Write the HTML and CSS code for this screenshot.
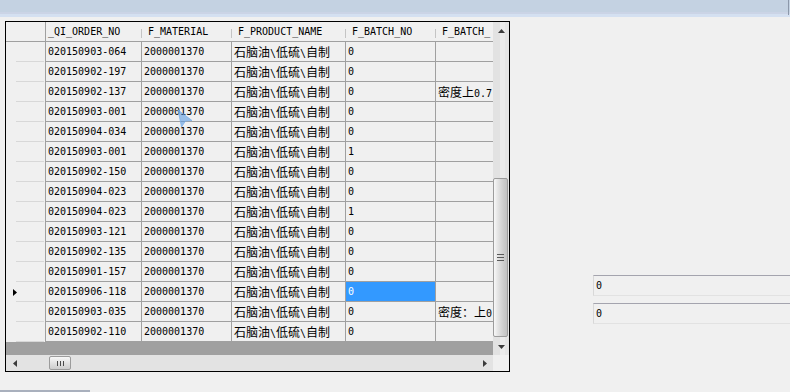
FILE: index.html
```html
<!DOCTYPE html>
<html>
<head>
<meta charset="utf-8">
<link rel="stylesheet" href="styles.css">
</head>
<body>
<div class="titlebar"><span class="edge"></span></div>
<div class="main">
  <div class="grid">
    <div class="table">
      <div class="row head">
        <div class="rh"></div>
        <div class="c c1">_QI_ORDER_NO</div>
        <div class="c">F_MATERIAL</div>
        <div class="c">F_PRODUCT_NAME</div>
        <div class="c">F_BATCH_NO</div>
        <div class="c">F_BATCH_</div>
      </div>
      <div class="row"><div class="rh"></div><div class="c">020150903-064</div><div class="c">2000001370</div><div class="c"><span class="zh">石脑油</span>\<span class="zh">低硫</span>\<span class="zh">自制</span></div><div class="c">0</div><div class="c"></div></div>
      <div class="row"><div class="rh"></div><div class="c">020150902-197</div><div class="c">2000001370</div><div class="c"><span class="zh">石脑油</span>\<span class="zh">低硫</span>\<span class="zh">自制</span></div><div class="c">0</div><div class="c"></div></div>
      <div class="row"><div class="rh"></div><div class="c">020150902-137</div><div class="c">2000001370</div><div class="c"><span class="zh">石脑油</span>\<span class="zh">低硫</span>\<span class="zh">自制</span></div><div class="c">0</div><div class="c"><span class="zh">密度上</span>0.7</div></div>
      <div class="row"><div class="rh"></div><div class="c">020150903-001</div><div class="c">2000001370</div><div class="c"><span class="zh">石脑油</span>\<span class="zh">低硫</span>\<span class="zh">自制</span></div><div class="c">0</div><div class="c"></div></div>
      <div class="row"><div class="rh"></div><div class="c">020150904-034</div><div class="c">2000001370</div><div class="c"><span class="zh">石脑油</span>\<span class="zh">低硫</span>\<span class="zh">自制</span></div><div class="c">0</div><div class="c"></div></div>
      <div class="row"><div class="rh"></div><div class="c">020150903-001</div><div class="c">2000001370</div><div class="c"><span class="zh">石脑油</span>\<span class="zh">低硫</span>\<span class="zh">自制</span></div><div class="c">1</div><div class="c"></div></div>
      <div class="row"><div class="rh"></div><div class="c">020150902-150</div><div class="c">2000001370</div><div class="c"><span class="zh">石脑油</span>\<span class="zh">低硫</span>\<span class="zh">自制</span></div><div class="c">0</div><div class="c"></div></div>
      <div class="row"><div class="rh"></div><div class="c">020150904-023</div><div class="c">2000001370</div><div class="c"><span class="zh">石脑油</span>\<span class="zh">低硫</span>\<span class="zh">自制</span></div><div class="c">0</div><div class="c"></div></div>
      <div class="row"><div class="rh"></div><div class="c">020150904-023</div><div class="c">2000001370</div><div class="c"><span class="zh">石脑油</span>\<span class="zh">低硫</span>\<span class="zh">自制</span></div><div class="c">1</div><div class="c"></div></div>
      <div class="row"><div class="rh"></div><div class="c">020150903-121</div><div class="c">2000001370</div><div class="c"><span class="zh">石脑油</span>\<span class="zh">低硫</span>\<span class="zh">自制</span></div><div class="c">0</div><div class="c"></div></div>
      <div class="row"><div class="rh"></div><div class="c">020150902-135</div><div class="c">2000001370</div><div class="c"><span class="zh">石脑油</span>\<span class="zh">低硫</span>\<span class="zh">自制</span></div><div class="c">0</div><div class="c"></div></div>
      <div class="row"><div class="rh"></div><div class="c">020150901-157</div><div class="c">2000001370</div><div class="c"><span class="zh">石脑油</span>\<span class="zh">低硫</span>\<span class="zh">自制</span></div><div class="c">0</div><div class="c"></div></div>
      <div class="row"><div class="rh"><svg class="marker" width="4" height="7" viewBox="0 0 4 7"><polygon points="0,0 4,3.5 0,7" fill="#000"/></svg></div><div class="c">020150906-118</div><div class="c">2000001370</div><div class="c"><span class="zh">石脑油</span>\<span class="zh">低硫</span>\<span class="zh">自制</span></div><div class="c sel">0</div><div class="c"></div></div>
      <div class="row"><div class="rh"></div><div class="c">020150903-035</div><div class="c">2000001370</div><div class="c"><span class="zh">石脑油</span>\<span class="zh">低硫</span>\<span class="zh">自制</span></div><div class="c">0</div><div class="c"><span class="zh">密度：上</span>0</div></div>
      <div class="row"><div class="rh"></div><div class="c">020150902-110</div><div class="c">2000001370</div><div class="c"><span class="zh">石脑油</span>\<span class="zh">低硫</span>\<span class="zh">自制</span></div><div class="c">0</div><div class="c"></div></div>
      <div class="filler"></div>
    </div>
    <div class="vscroll">
      <div class="vbtn"><svg width="7" height="4" viewBox="0 0 7 4"><polygon points="0,4 3.5,0 7,4" fill="#3c3c3c"/></svg></div>
      <div class="vtrack"><div class="vthumb"><div class="vgrip"></div></div></div>
      <div class="vbtn"><svg width="7" height="4" viewBox="0 0 7 4"><polygon points="0,0 7,0 3.5,4" fill="#3c3c3c"/></svg></div>
    </div>
    <div class="hscroll">
      <svg class="hl" width="4" height="7" viewBox="0 0 4 7"><polygon points="4,0 0,3.5 4,7" fill="#3c3c3c"/></svg>
      <div class="hthumb"><div class="hgrip"></div></div>
      <svg class="hr" width="4" height="7" viewBox="0 0 4 7"><polygon points="0,0 4,3.5 0,7" fill="#3c3c3c"/></svg>
    </div>
    <div class="corner"></div>
    <svg class="cursor" width="17" height="20" viewBox="0 0 17 20"><polygon points="1,1 15,11.5 8.5,12 4.5,18" fill="rgba(80,150,225,0.55)" stroke="rgba(120,175,235,0.7)" stroke-width="1"/></svg>
  </div>
  <div class="side">
    <div class="box">0</div>
    <div class="box">0</div>
  </div>
</div>
<div class="footer"><div class="tab"></div></div>
</body>
</html>
```
FILE: styles.css
```css
* { box-sizing: border-box; }
html, body { margin: 0; padding: 0; }
body {
  width: 790px;
  height: 392px;
  overflow: hidden;
  background: #f0f0f0;
  font-family: "DejaVu Sans Mono", "Liberation Mono", monospace;
  font-size: 10px;
  color: #000;
}
.titlebar {
  height: 17px;
  background: linear-gradient(#c4d2e2 0 12px, #cbd4e6 12px 14px, #d4e0f1 14px);
  display: flex;
  justify-content: flex-end;
}
.edge { width: 1px; height: 15px; background: #8c98aa; margin-right: 1px; }
.main {
  display: flex;
  align-items: flex-start;
  margin-top: 4px;
  padding-left: 5px;
}
.grid {
  position: relative;
  flex: none;
  width: 505px;
  height: 351px;
  border: 1px solid #000;
  display: grid;
  grid-template-columns: 487px 16px;
  grid-template-rows: 333px 16px;
}
.table {
  background: #a0a0a0;
  overflow: hidden;
  display: flex;
  flex-direction: column;
}
.row {
  flex: none;
  display: grid;
  grid-template-columns: 40px 96px 90px 114px 90px 90px;
  height: 20px;
}
.c {
  background: #f0f0f0;
  border-right: 1px solid #a0a0a0;
  border-bottom: 1px solid #a0a0a0;
  line-height: 19px;
  padding-left: 2px;
  white-space: nowrap;
  overflow: hidden;
}
.zh { font-family: "Noto Sans CJK SC", sans-serif; font-size: 12px; }
.rh {
  background: #f0f0f0 linear-gradient(#d8d8d8, #d8d8d8) no-repeat 10px 19px / 28px 1px;
  border-right: 1px solid #a0a0a0;
  display: flex;
  align-items: center;
  padding-left: 7px;
}
.head .rh { background: #f0f0f0; border-bottom: 1px solid #a0a0a0; }
.head .c {
  border-right: none;
  padding-left: 6px;
  background: #f0f0f0 linear-gradient(#c4c4c4, #c4c4c4) no-repeat right 0 top 7px / 1px 9px;
}
.head .c1 { padding-left: 2px; }
.sel { background: #3399ff; color: #fff; }
.filler { flex: 1; }
.marker { display: block; }

.vscroll {
  background: linear-gradient(to right, #e2e2e2 0 7px, #ebebeb 7px 12px, #e5e5e5 12px);
  display: flex;
  flex-direction: column;
}
.vbtn { height: 17px; flex: none; display: flex; align-items: center; justify-content: center; }
.vtrack { flex: 1; padding-top: 139px; }
.vthumb {
  width: 15px;
  height: 159px;
  border: 1px solid #9c9c9c;
  border-radius: 2px;
  background: linear-gradient(to right, #f8f8f8, #e4e4e4 30%, #cfcfcf 70%, #c2c2c2);
  display: flex;
  align-items: center;
  justify-content: center;
}
.vgrip {
  width: 7px;
  height: 7px;
  background: repeating-linear-gradient(#5a5a5a 0 1px, transparent 1px 3px);
}
.hscroll {
  background: #e3e3e3;
  display: flex;
  align-items: center;
}
.hl { margin-left: 7px; }
.hthumb {
  margin-left: 32px;
  width: 22px;
  height: 14px;
  border: 1px solid #9c9c9c;
  border-radius: 2px;
  background: linear-gradient(#f8f8f8, #e2e2e2 50%, #cdcdcd);
  display: flex;
  align-items: center;
  justify-content: center;
}
.hgrip {
  width: 7px;
  height: 5px;
  background: repeating-linear-gradient(to right, #4a4a4a 0 1px, transparent 1px 3px);
}
.hr { margin-left: auto; margin-right: 6px; }
.corner { background: #f0f0f0; }
.cursor { position: absolute; left: 171px; top: 87px; }

.side {
  flex: none;
  width: 200px;
  margin-left: 83px;
  margin-top: 254px;
  display: flex;
  flex-direction: column;
  gap: 7px;
}
.box {
  height: 21px;
  border-top: 1px solid #a4a4ae;
  border-left: 1px solid #d8d8d8;
  border-bottom: 1px solid #e2e2e2;
  padding-left: 2px;
  line-height: 19px;
}
.footer { margin-top: 18px; }
.tab { width: 90px; height: 2px; background: #a9b0bd; }
```
